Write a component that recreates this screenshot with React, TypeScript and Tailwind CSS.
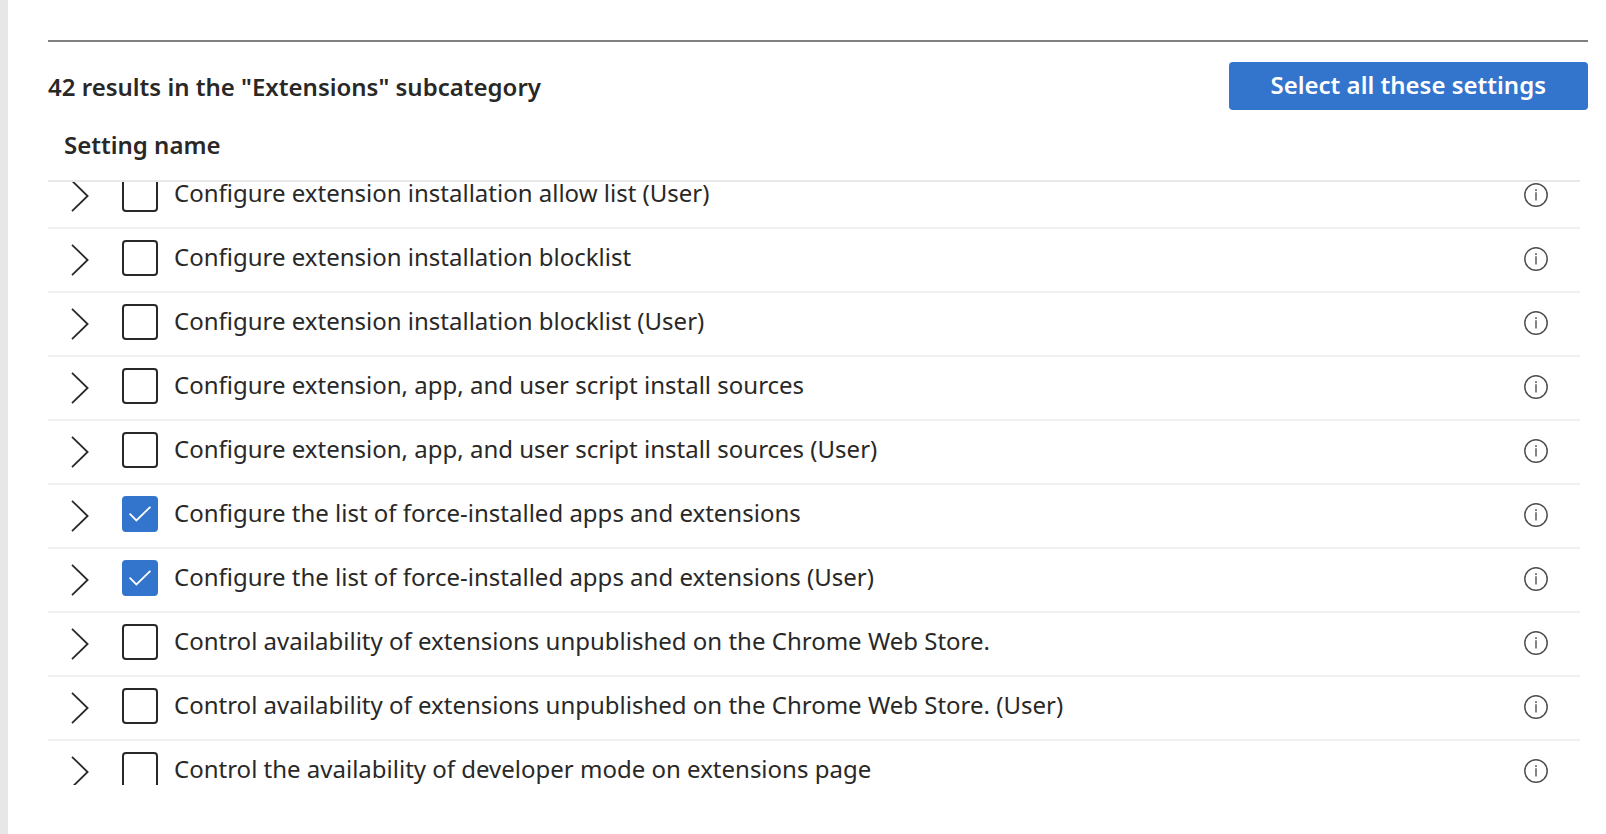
import { useState } from "react";

type Setting = { name: string; selected: boolean };

const initialSettings: Setting[] = [
  { name: "Configure extension installation allow list (User)", selected: false },
  { name: "Configure extension installation blocklist", selected: false },
  { name: "Configure extension installation blocklist (User)", selected: false },
  { name: "Configure extension, app, and user script install sources", selected: false },
  { name: "Configure extension, app, and user script install sources (User)", selected: false },
  { name: "Configure the list of force-installed apps and extensions", selected: true },
  { name: "Configure the list of force-installed apps and extensions (User)", selected: true },
  { name: "Control availability of extensions unpublished on the Chrome Web Store.", selected: false },
  { name: "Control availability of extensions unpublished on the Chrome Web Store. (User)", selected: false },
  { name: "Control the availability of developer mode on extensions page", selected: false },
];

function ChevronIcon() {
  return (
    <svg className="h-8 w-5" viewBox="0 0 20 32" fill="none" stroke="#292827" strokeWidth="1.8" aria-hidden="true">
      <path d="M2 0.8 17.6 16 2 31.2" />
    </svg>
  );
}

function CheckIcon() {
  return (
    <svg
      className="pointer-events-none col-start-1 row-start-1 size-9"
      viewBox="0 0 36 36"
      fill="none"
      stroke="#fff"
      strokeWidth="1.8"
      aria-hidden="true"
    >
      <path d="M7.6 17.6 14.4 24.5 28.4 10.8" />
    </svg>
  );
}

function InfoIcon() {
  return (
    <svg className="size-6" viewBox="0 0 24 24" fill="none" aria-hidden="true">
      <circle cx="12" cy="12" r="11.2" stroke="#505050" strokeWidth="1.5" />
      <path d="M12 9.3V17.6" stroke="#666" strokeWidth="1.6" />
      <path d="M12 6.2V7.9" stroke="#666" strokeWidth="1.8" />
    </svg>
  );
}

function SettingRow({ id, setting, onToggle }: { id: string; setting: Setting; onToggle: () => void }) {
  return (
    <tr className="flex h-16 border-b-2 border-[#f1f1f1] first:-mt-[17px]">
      <td className="w-[74px] pt-[15px] pl-[22px]">
        <button type="button" className="block" aria-label={`Expand ${setting.name}`}>
          <ChevronIcon />
        </button>
      </td>
      <td className="flex min-w-0 flex-1 gap-4 pt-[11px]">
        <span className="grid size-9 shrink-0">
          <input
            id={id}
            type="checkbox"
            checked={setting.selected}
            onChange={onToggle}
            className="col-start-1 row-start-1 size-9 appearance-none rounded-[4px] border-2 border-[#292827] bg-white checked:border-[#3374cd] checked:bg-[#3374cd]"
          />
          {setting.selected && <CheckIcon />}
        </span>
        <label htmlFor={id} className="truncate leading-[34px]">
          {setting.name}
        </label>
      </td>
      <td className="w-14 pt-[18px]">
        <button type="button" className="block" aria-label={`About ${setting.name}`}>
          <InfoIcon />
        </button>
      </td>
    </tr>
  );
}

export default function App() {
  const [settings, setSettings] = useState(initialSettings);

  const toggle = (index: number) =>
    setSettings((rows) => rows.map((row, i) => (i === index ? { ...row, selected: !row.selected } : row)));
  const selectAll = () => setSettings((rows) => rows.map((row) => ({ ...row, selected: true })));

  return (
    <main className="flex h-screen flex-col border-l-8 border-[#e7e7e7] bg-white pt-10 pr-[18px] pb-[49px] pl-10 font-['Noto_Sans','Open_Sans',sans-serif] text-[24px] text-[#292827]">
      <hr className="shrink-0 border-t-2 border-[#808080]" />
      <header className="flex shrink-0 items-center justify-between pt-5">
        <h2 className="pt-0.5 font-semibold">42 results in the "Extensions" subcategory</h2>
        <button
          type="button"
          onClick={selectAll}
          className="h-12 rounded-[4px] bg-[#3374cd] px-[42px] pb-0.5 leading-10 font-semibold text-white"
        >
          Select all these settings
        </button>
      </header>
      <table className="mr-2 flex min-h-0 flex-1 flex-col">
        <thead className="block shrink-0">
          <tr className="flex h-[72px] border-b-2 border-[#e8e8e8]">
            <th scope="col" className="pt-[18px] pl-4 text-left leading-[34px] font-semibold">
              Setting name
            </th>
          </tr>
        </thead>
        <tbody className="block min-h-0 flex-1 overflow-hidden">
          {settings.map((setting, index) => (
            <SettingRow key={setting.name} id={`setting-${index}`} setting={setting} onToggle={() => toggle(index)} />
          ))}
        </tbody>
      </table>
    </main>
  );
}
